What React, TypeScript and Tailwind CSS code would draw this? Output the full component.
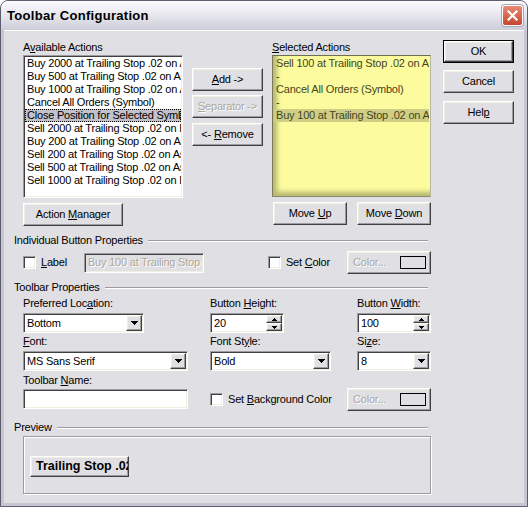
import type { ReactNode } from 'react'

const raised =
  'bg-[#e0dfe3] border border-t-white border-l-white border-r-[#404040] border-b-[#404040] shadow-[inset_-1px_-1px_0_#9d9da1,inset_1px_1px_0_#f1efe2]'
const sunken =
  'border border-t-[#9d9da1] border-l-[#9d9da1] border-r-white border-b-white shadow-[inset_1px_1px_0_#404040,inset_-1px_-1px_0_#f1efe2]'
const dimText = 'text-[#aca899] [text-shadow:1px_1px_0_#fff]'

const available = [
  'Buy 2000 at Trailing Stop .02 on Ask',
  'Buy 500 at Trailing Stop .02 on Ask',
  'Buy 1000 at Trailing Stop .02 on Ask',
  'Cancel All Orders (Symbol)',
  'Close Position for Selected Symbol',
  'Sell 2000 at Trailing Stop .02 on Bid',
  'Buy 200 at Trailing Stop .02 on Ask',
  'Sell 200 at Trailing Stop .02 on Ask',
  'Sell 500 at Trailing Stop .02 on Ask',
  'Sell 1000 at Trailing Stop .02 on Bid',
]

const selected = [
  'Sell 100 at Trailing Stop .02 on Ask',
  '-',
  'Cancel All Orders (Symbol)',
  '-',
  'Buy 100 at Trailing Stop .02 on Ask',
]

function Button({
  children,
  className = '',
  disabled = false,
}: {
  children: ReactNode
  className?: string
  disabled?: boolean
}) {
  return (
    <div
      className={`${raised} flex items-center justify-center whitespace-nowrap leading-[13px] ${
        disabled ? dimText : 'text-black'
      } ${className}`}
    >
      <span>{children}</span>
    </div>
  )
}

function DownArrow() {
  return (
    <svg width="7" height="4" viewBox="0 0 7 4" shapeRendering="crispEdges">
      <path d="M0 0h7L3.5 4z" fill="#000" />
    </svg>
  )
}

function Combo({ value, className }: { value: string; className: string }) {
  return (
    <div className={`${sunken} bg-white h-[20px] flex items-center ${className}`}>
      <span className="flex-1 pl-[3px] leading-[13px] whitespace-nowrap">{value}</span>
      <div className={`${raised} w-[16px] h-[16px] mr-[1px] flex items-center justify-center`}>
        <DownArrow />
      </div>
    </div>
  )
}

function Spin({ value }: { value: string }) {
  return (
    <div className={`${sunken} bg-white h-[20px] w-[74px] flex items-center`}>
      <span className="flex-1 pl-[3px] leading-[13px]">{value}</span>
      <div className="flex flex-col mr-[1px]">
        <div className={`${raised} w-[16px] h-[8px] flex items-center justify-center`}>
          <svg width="5" height="3" viewBox="0 0 5 3" shapeRendering="crispEdges">
            <path d="M2.5 0L5 3H0z" fill="#000" />
          </svg>
        </div>
        <div className={`${raised} w-[16px] h-[8px] flex items-center justify-center`}>
          <svg width="5" height="3" viewBox="0 0 5 3" shapeRendering="crispEdges">
            <path d="M0 0h5L2.5 3z" fill="#000" />
          </svg>
        </div>
      </div>
    </div>
  )
}

function Check() {
  return <div className={`${sunken} bg-white w-[13px] h-[13px] shrink-0`} />
}

function ColorButton() {
  return (
    <div className={`${raised} w-[84px] h-[23px] flex items-center pl-[5px]`}>
      <span className={`${dimText} leading-[13px]`}>Color...</span>
      <div className="ml-auto mr-[4px] w-[26px] h-[13px] border border-black" />
    </div>
  )
}

function GroupHeader({ children }: { children: ReactNode }) {
  return (
    <div className="flex items-center h-[13px] leading-[13px]">
      <span className="whitespace-nowrap">{children}</span>
      <div className="flex-1 ml-[5px] h-[2px] border-t border-t-[#9d9da1] border-b border-b-white" />
    </div>
  )
}

export default function App() {
  return (
    <div className="w-[528px] h-[507px] bg-[#c7c6d3] border border-[#5d5d6e] rounded-t-[8px] overflow-hidden flex flex-col font-['Liberation_Sans',Arial,sans-serif] text-[11px] tracking-[-0.2px] text-black">
      {/* title bar */}
      <div className="h-[29px] shrink-0 flex items-center justify-between pl-[6px] pr-[4px] bg-gradient-to-b from-[#fbfbfd] via-[#e6e6ee] to-[#cdcdd9]">
        <span className="font-bold text-[13px] tracking-[0.3px]">Toolbar Configuration</span>
        <div className="w-[21px] h-[21px] rounded-[3px] border border-white bg-gradient-to-b from-[#e98a74] to-[#c8442c] flex items-center justify-center shadow-[0_0_0_1px_#a7a7b5]">
          <svg width="11" height="11" viewBox="0 0 11 11">
            <path d="M1.5 1.5l8 8M9.5 1.5l-8 8" stroke="#fff" strokeWidth="2.2" strokeLinecap="square" />
          </svg>
        </div>
      </div>

      {/* client area */}
      <div className="flex-1 mx-[3px] mb-[3px] bg-[#e0dfe3] border-t border-t-white flex pt-[9px] pl-[10px]">
        <div className="w-[417px] flex flex-col">
          {/* lists row */}
          <div className="flex pl-[9px]">
            <div className="w-[160px] flex flex-col">
              <div className="h-[15px] leading-[13px] pt-[1px]">
                A<u>v</u>ailable Actions
              </div>
              <div className={`${sunken} bg-white h-[143px] p-[1px] overflow-hidden`}>
                {available.map((a, i) => (
                  <div
                    key={i}
                    className={`h-[13px] leading-[13px] px-[2px] whitespace-nowrap overflow-hidden ${
                      i === 4 ? 'bg-[#c3c2cb] outline-1 outline-dotted outline-black -outline-offset-1' : ''
                    }`}
                  >
                    {a}
                  </div>
                ))}
              </div>
              <Button className="mt-[5px] w-[100px] h-[23px]">
                Action <u>M</u>anager
              </Button>
            </div>

            <div className="ml-[9px] mt-[28px] flex flex-col w-[71px]">
              <Button className="h-[23px]">
                <u>A</u>dd -&gt;
              </Button>
              <Button className="h-[23px] mt-[4px]" disabled>
                <u>S</u>eparator -&gt;
              </Button>
              <Button className="h-[23px] mt-[5px]">
                &lt;- <u>R</u>emove
              </Button>
            </div>

            <div className="ml-[9px] w-[159px] flex flex-col">
              <div className="h-[15px] leading-[13px] pt-[1px]">
                <u>S</u>elected Actions
              </div>
              <div className="h-[142px] bg-[#fcfc9e] border border-t-[#6f6f50] border-l-[#7a7a58] border-r-[#b8b8a0] border-b-[#8a8a70] p-[1px] overflow-hidden shadow-[inset_4px_-4px_5px_rgba(0,0,0,0.28)] text-[#45451c]">
                {selected.map((a, i) => (
                  <div
                    key={i}
                    className={`h-[13px] leading-[13px] px-[2px] whitespace-nowrap overflow-hidden ${
                      i === 4 ? 'bg-[#cfce84]' : ''
                    }`}
                  >
                    {a}
                  </div>
                ))}
              </div>
              <div className="flex mt-[5px] pl-[1px] gap-[10px]">
                <Button className="w-[74px] h-[23px]">
                  Move <u>U</u>p
                </Button>
                <Button className="w-[74px] h-[23px]">
                  Move <u>D</u>own
                </Button>
              </div>
            </div>
          </div>

          {/* individual button properties */}
          <div className="mt-[8px] pr-[3px]">
            <GroupHeader>Individual Button Properties</GroupHeader>
          </div>
          <div className="mt-[4px] h-[23px] flex items-center pl-[9px] whitespace-nowrap">
            <Check />
            <span className="ml-[5px] leading-[13px]">
              <u>L</u>abel
            </span>
            <div className={`${sunken} ml-[17px] w-[120px] h-[20px] flex items-center pl-[3px] overflow-hidden`}>
              <span className={dimText}>Buy 100 at Trailing Stop</span>
            </div>
            <div className="ml-[64px]">
              <Check />
            </div>
            <span className="ml-[5px] leading-[13px]">
              Set <u>C</u>olor
            </span>
            <div className="ml-auto">
              <ColorButton />
            </div>
          </div>

          {/* toolbar properties */}
          <div className="mt-[7px] pr-[3px]">
            <GroupHeader>Toolbar Properties</GroupHeader>
          </div>
          <div className="flex pl-[9px] mt-[3px] whitespace-nowrap">
            <div className="w-[187px]">
              <div className="leading-[13px] h-[13px]">
                Preferred Loc<u>a</u>tion:
              </div>
              <Combo value="Bottom" className="mt-[3px] w-[121px]" />
            </div>
            <div className="w-[147px]">
              <div className="leading-[13px] h-[13px]">
                Button <u>H</u>eight:
              </div>
              <div className="mt-[3px]">
                <Spin value="20" />
              </div>
            </div>
            <div>
              <div className="leading-[13px] h-[13px]">
                Button <u>W</u>idth:
              </div>
              <div className="mt-[3px]">
                <Spin value="100" />
              </div>
            </div>
          </div>
          <div className="flex pl-[9px] mt-[2px] whitespace-nowrap">
            <div className="w-[187px]">
              <div className="leading-[13px] h-[13px]">
                <u>F</u>ont:
              </div>
              <Combo value="MS Sans Serif" className="mt-[3px] w-[165px]" />
            </div>
            <div className="w-[147px]">
              <div className="leading-[13px] h-[13px]">
                Font St<u>y</u>le:
              </div>
              <Combo value="Bold" className="mt-[3px] w-[121px]" />
            </div>
            <div>
              <div className="leading-[13px] h-[13px]">
                Si<u>z</u>e:
              </div>
              <Combo value="8" className="mt-[3px] w-[74px]" />
            </div>
          </div>
          <div className="flex pl-[9px] mt-[3px] whitespace-nowrap">
            <div className="w-[187px]">
              <div className="leading-[13px] h-[13px]">
                Toolbar <u>N</u>ame:
              </div>
              <div className={`${sunken} bg-white mt-[2px] w-[165px] h-[20px]`} />
            </div>
            <div className="flex-1 mt-[14px] h-[23px] flex items-center">
              <Check />
              <span className="ml-[5px] leading-[13px]">
                Set <u>B</u>ackground Color
              </span>
              <div className="ml-auto">
                <ColorButton />
              </div>
            </div>
          </div>

          {/* preview */}
          <div className="mt-[10px] pr-[3px]">
            <GroupHeader>Preview</GroupHeader>
          </div>
          <div className="ml-[9px] mt-[2px] w-[408px] h-[58px] border border-[#9d9da1] shadow-[inset_1px_1px_0_#fff,1px_1px_0_#fff] pl-[6px] pt-[19px]">
            <div className={`${raised} w-[99px] h-[21px] flex items-center pl-[5px] overflow-hidden whitespace-nowrap font-bold text-[12.5px] tracking-normal`}>
              Trailing Stop .02
            </div>
          </div>
        </div>

        {/* right buttons */}
        <div className="ml-[12px] flex flex-col">
          <div className="border border-black w-[71px] h-[23px]">
            <Button className="w-full h-full">OK</Button>
          </div>
          <Button className="mt-[7px] w-[71px] h-[23px]">Cancel</Button>
          <Button className="mt-[8px] w-[71px] h-[23px]">
            Hel<u>p</u>
          </Button>
        </div>
      </div>
    </div>
  )
}
